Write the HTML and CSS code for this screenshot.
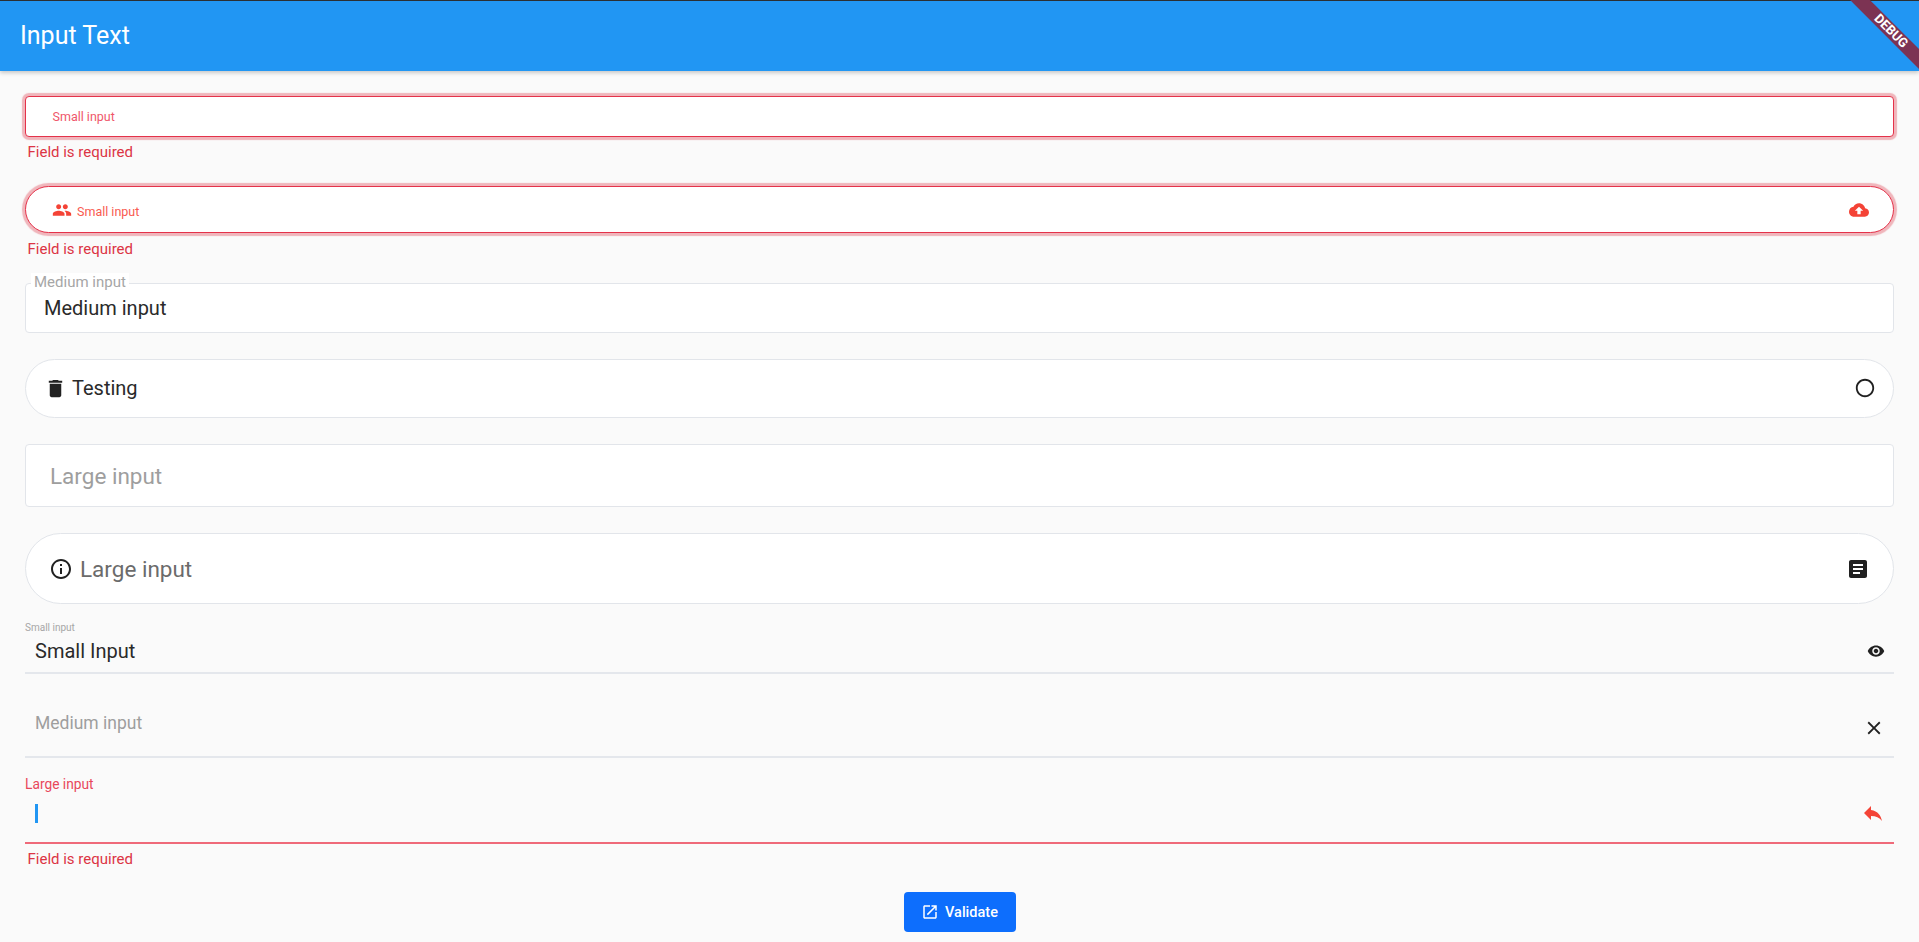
FILE: index.html
```html
<!DOCTYPE html>
<html lang="en">
<head>
<meta charset="utf-8">
<title>Input Text</title>
<link rel="stylesheet" href="styles.css">
</head>
<body>
<header class="appbar"><h1 class="appbar-title">Input Text</h1></header>
<div class="banner">DEBUG</div>
<main class="page">
  <div class="field f1 invalid rect"><span class="txt t12 pad-small">Small input</span></div>
  <div class="error e1">Field is required</div>

  <div class="field f2 invalid pill">
    <svg class="icon i-people" viewBox="0 0 24 24"><path d="M16 11c1.66 0 2.99-1.34 2.99-3S17.66 5 16 5c-1.66 0-3 1.34-3 3s1.34 3 3 3zm-8 0c1.66 0 2.99-1.34 2.99-3S9.66 5 8 5C6.34 5 5 6.34 5 8s1.34 3 3 3zm0 2c-2.33 0-7 1.17-7 3.5V19h14v-2.5c0-2.33-4.67-3.5-7-3.5zm8 0c-.29 0-.62.02-.97.05 1.16.84 1.97 1.97 1.97 3.45V19h6v-2.5c0-2.33-4.67-3.5-7-3.5z"/></svg>
    <span class="txt t12 red2">Small input</span>
    <svg class="icon i-cloud" viewBox="0 0 24 24"><path d="M19.35 10.04C18.67 6.59 15.64 4 12 4 9.11 4 6.6 5.64 5.35 8.04 2.34 8.36 0 10.91 0 14c0 3.31 2.69 6 6 6h13c2.76 0 5-2.24 5-5 0-2.64-2.05-4.78-4.65-4.96zM14 13v4h-4v-4H7l5-5 5 5h-3z"/></svg>
  </div>
  <div class="error e2">Field is required</div>

  <div class="field f3 rect plain">
    <span class="float-label">Medium input</span>
    <span class="txt t20 dark">Medium input</span>
  </div>

  <div class="field f4 pill plain">
    <svg class="icon i-trash" viewBox="0 0 24 24"><path d="M6 19c0 1.1.9 2 2 2h8c1.1 0 2-.9 2-2V7H6v12zM19 4h-3.5l-1-1h-5l-1 1H5v2h14V4z"/></svg>
    <span class="txt t20 dark">Testing</span>
    <svg class="icon i-circle" viewBox="0 0 24 24"><path d="M12 2C6.47 2 2 6.47 2 12s4.47 10 10 10 10-4.47 10-10S17.53 2 12 2zm0 18c-4.41 0-8-3.59-8-8s3.59-8 8-8 8 3.59 8 8-3.59 8-8 8z"/></svg>
  </div>

  <div class="field f5 rect plain"><span class="txt t22 hint">Large input</span></div>

  <div class="field f6 pill plain">
    <svg class="icon i-info" viewBox="0 0 24 24"><path d="M11 7h2v2h-2zm0 4h2v6h-2zm1-9C6.48 2 2 6.48 2 12s4.48 10 10 10 10-4.48 10-10S17.52 2 12 2zm0 18c-4.41 0-8-3.59-8-8s3.59-8 8-8 8 3.59 8 8-3.59 8-8 8z"/></svg>
    <span class="txt t22 mid">Large input</span>
    <svg class="icon i-article" viewBox="0 0 24 24"><path d="M19 3H5c-1.1 0-2 .9-2 2v14c0 1.1.9 2 2 2h14c1.1 0 2-.9 2-2V5c0-1.1-.9-2-2-2zm-5 14H7v-2h7v2zm3-4H7v-2h10v2zm0-4H7V7h10v2z"/></svg>
  </div>

  <div class="under u1">
    <div class="under-label tiny">Small input</div>
    <div class="under-row row1">
      <span class="txt t20 dark">Small Input</span>
      <svg class="icon i-eye" viewBox="0 0 24 24"><path d="M12 4.5C7 4.5 2.73 7.61 1 12c1.73 4.39 6 7.5 11 7.5s9.27-3.11 11-7.5c-1.73-4.39-6-7.5-11-7.5zM12 17c-2.76 0-5-2.24-5-5s2.24-5 5-5 5 2.24 5 5-2.24 5-5 5zm0-8c-1.66 0-3 1.34-3 3s1.34 3 3 3 3-1.34 3-3-1.34-3-3-3z"/></svg>
    </div>
  </div>

  <div class="under u2">
    <div class="under-row row2">
      <span class="txt t18 hint">Medium input</span>
      <svg class="icon i-close" viewBox="0 0 24 24"><path d="M19 6.41L17.59 5 12 10.59 6.41 5 5 6.41 10.59 12 5 17.59 6.41 19 12 13.41 17.59 19 19 17.59 13.41 12z"/></svg>
    </div>
  </div>

  <div class="under u3">
    <div class="under-label redlabel">Large input</div>
    <div class="under-row row3">
      <span class="caret"></span>
      <svg class="icon i-reply" viewBox="0 0 24 24"><path d="M10 9V5l-7 7 7 7v-4.1c5 0 8.5 1.6 11 5.1-1-5-4-10-11-11z"/></svg>
    </div>
  </div>
  <div class="error e3">Field is required</div>

  <div class="actions">
    <button class="btn" type="button">
      <svg class="icon i-open" viewBox="0 0 24 24"><path d="M19 19H5V5h7V3H5c-1.11 0-2 .9-2 2v14c0 1.1.89 2 2 2h14c1.1 0 2-.9 2-2v-7h-2v7zM14 3v2h3.59l-9.83 9.83 1.41 1.41L19 6.41V10h2V3h-7z"/></svg>
      <span>Validate</span>
    </button>
  </div>
</main>
</body>
</html>
```
FILE: styles.css
```css
* { box-sizing: border-box; }
html, body { margin: 0; height: 100%; overflow: hidden; }
body { position: relative; background: #fafafa; font-family: Roboto, "Liberation Sans", sans-serif; color: #212121; }

.appbar { height: 71px; background: #2196f3; border-top: 1px solid #2b2f33; display: flex; align-items: center; padding-left: 20px; box-shadow: 0 2px 4px rgba(0,0,0,.2); }
.appbar-title { margin: 0; font-size: 25px; font-weight: 400; color: #fff; line-height: 28px; }

.banner { position: absolute; top: 24px; right: -32px; width: 120px; height: 14px; transform: rotate(45deg); background: #7c3353; color: #fff; font-size: 13px; font-weight: 700; line-height: 14px; text-align: center; }

.page { padding: 25px 25px 0 25px; }

.field { display: flex; align-items: center; position: relative; background: #fff; }
.rect { border-radius: 4px; }
.pill { border-radius: 40px; }
.plain { border: 1px solid #e2e5ea; margin-bottom: 26px; }
.invalid { border: 1px solid #e4324a; box-shadow: 0 0 1px 3px rgba(220,53,69,.35); }

.f1 { height: 41px; padding-left: 26.5px; }
.f2 { height: 47px; padding: 0 24px 0 25.5px; }
.f3 { height: 50px; padding: 0 0 1px 18px; }
.f4 { height: 59px; padding: 0 17px 1px 17px; }
.f5 { height: 63px; padding-left: 24px; }
.f6 { height: 71px; padding: 0 23px 0 23px; margin-bottom: 19px; }

.txt { white-space: nowrap; }
.t12 { font-size: 12.5px; color: #ef566a; }
.red2 { color: #f95a50; padding-top: 4px; }
.t18 { font-size: 17.5px; line-height: 24px; }
.t20 { font-size: 20px; }
.t22 { font-size: 22.5px; }
.dark { color: #2a2a2a; }
.hint { color: #9e9e9e; }
.mid { color: #6b6b6b; }

.error { font-size: 15px; line-height: 20px; color: #dc3545; padding-left: 2.5px; }
.e1 { margin: 5px 0 24px; }
.e2 { margin: 6px 0 24px; }
.e3 { margin: 5px 0 23px; }

.float-label { position: absolute; left: 5px; top: -11px; padding: 0 3px; background: #fff; font-size: 15px; line-height: 18px; color: #a6a6a6; }

.icon { display: block; flex: none; fill: currentColor; }
.i-people { width: 20px; height: 20px; margin-right: 5.5px; color: #f44336; }
.i-cloud { width: 20px; height: 20px; margin-left: auto; color: #f44336; }
.i-trash { width: 23px; height: 23px; margin: 0 5.5px 0 .5px; color: #212121; }
.i-circle { width: 22px; height: 22px; margin-left: auto; color: #212121; }
.i-info { width: 24px; height: 24px; margin-right: 7px; color: #212121; }
.i-article { width: 24px; height: 24px; margin-left: auto; color: #212121; }
.i-eye { width: 18px; height: 18px; margin-left: auto; margin-right: 9px; color: #212121; }
.i-close { width: 22px; height: 22px; margin-left: auto; margin-top: 6px; margin-right: 9px; color: #212121; }
.i-reply { width: 24px; height: 24px; margin-left: auto; margin-right: 9px; color: #f44336; }

.under { border-bottom: 2px solid #e4e7ec; }
.under-label { white-space: nowrap; }
.tiny { font-size: 10px; line-height: 10px; height: 10px; color: #a6a6a6; }
.redlabel { font-size: 13.75px; line-height: 16px; color: #e8475b; }
.under-row { display: flex; padding-left: 10px; }
.row1 { height: 39px; align-items: center; padding-bottom: 3px; }
.row2 { height: 82px; align-items: flex-start; padding-top: 37px; }
.row3 { height: 50px; align-items: center; padding-bottom: 8px; }
.u3 { margin-top: 18px; border-bottom-color: #ef6a79; }
.caret { display: block; width: 2.5px; height: 19px; background: #2196f3; }

.actions { display: flex; justify-content: center; }
.btn { display: flex; align-items: center; justify-content: center; gap: 6px; width: 112px; height: 40px; border: 0; padding: 0; border-radius: 4px; background: #0d6efd; color: #fff; font: 500 14.5px Roboto, sans-serif; }
.i-open { width: 18px; height: 18px; }
```
